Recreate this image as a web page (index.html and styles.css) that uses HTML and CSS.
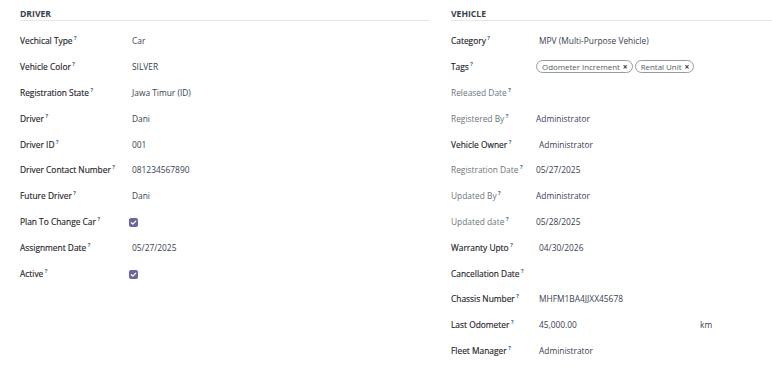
FILE: index.html
```html
<!DOCTYPE html>
<html>
<head>
<meta charset="utf-8">
<link rel="stylesheet" href="styles.css">
</head>
<body>
<div class="sheet">
  <section class="group group-left">
    <div class="group-title">Driver</div>
    <div class="fields">
      <div class="row"><div class="label">Vechical Type<sup>?</sup></div><div class="value edit">Car</div></div>
      <div class="row"><div class="label">Vehicle Color<sup>?</sup></div><div class="value edit">SILVER</div></div>
      <div class="row"><div class="label">Registration State<sup>?</sup></div><div class="value edit">Jawa Timur (ID)</div></div>
      <div class="row"><div class="label">Driver<sup>?</sup></div><div class="value edit">Dani</div></div>
      <div class="row"><div class="label">Driver ID<sup>?</sup></div><div class="value edit">001</div></div>
      <div class="row"><div class="label">Driver Contact Number<sup>?</sup></div><div class="value edit">081234567890</div></div>
      <div class="row"><div class="label">Future Driver<sup>?</sup></div><div class="value edit">Dani</div></div>
      <div class="row"><div class="label">Plan To Change Car<sup>?</sup></div><div class="value"><span class="check"><svg viewBox="0 0 10 10" width="9" height="9"><path d="M2.6 5.2 L4.3 6.8 L7.5 3.4" fill="none" stroke="#fff" stroke-width="1.4" stroke-linecap="round" stroke-linejoin="round"/></svg></span></div></div>
      <div class="row"><div class="label">Assignment Date<sup>?</sup></div><div class="value edit">05/27/2025</div></div>
      <div class="row"><div class="label">Active<sup>?</sup></div><div class="value"><span class="check"><svg viewBox="0 0 10 10" width="9" height="9"><path d="M2.6 5.2 L4.3 6.8 L7.5 3.4" fill="none" stroke="#fff" stroke-width="1.4" stroke-linecap="round" stroke-linejoin="round"/></svg></span></div></div>
    </div>
  </section>
  <section class="group group-right">
    <div class="group-title">Vehicle</div>
    <div class="fields">
      <div class="row"><div class="label">Category<sup>?</sup></div><div class="value edit">MPV (Multi-Purpose Vehicle)</div></div>
      <div class="row"><div class="label">Tags<sup>?</sup></div><div class="value tags"><span class="tag">Odometer Increment <b>×</b></span><span class="tag">Rental Unit <b>×</b></span></div></div>
      <div class="row"><div class="label muted">Released Date<sup>?</sup></div><div class="value"></div></div>
      <div class="row"><div class="label muted">Registered By<sup>?</sup></div><div class="value link">Administrator</div></div>
      <div class="row"><div class="label">Vehicle Owner<sup>?</sup></div><div class="value edit">Administrator</div></div>
      <div class="row"><div class="label muted">Registration Date<sup>?</sup></div><div class="value">05/27/2025</div></div>
      <div class="row"><div class="label muted">Updated By<sup>?</sup></div><div class="value link">Administrator</div></div>
      <div class="row"><div class="label muted">Updated date<sup>?</sup></div><div class="value">05/28/2025</div></div>
      <div class="row"><div class="label">Warranty Upto<sup>?</sup></div><div class="value edit">04/30/2026</div></div>
      <div class="row"><div class="label">Cancellation Date<sup>?</sup></div><div class="value edit"></div></div>
      <div class="row"><div class="label">Chassis Number<sup>?</sup></div><div class="value edit">MHFM1BA4JJXX45678</div></div>
      <div class="row"><div class="label">Last Odometer<sup>?</sup></div><div class="value edit odo"><span class="odo-num">45,000.00</span><span>km</span></div></div>
      <div class="row"><div class="label">Fleet Manager<sup>?</sup></div><div class="value edit">Administrator</div></div>
    </div>
  </section>
</div>
</body>
</html>
```
FILE: styles.css
```css
html, body {
  margin: 0;
  padding: 0;
  background: #ffffff;
}
body {
  width: 772px;
  height: 370px;
  overflow: hidden;
  font-family: "Open Sans", "Noto Sans", sans-serif;
  font-size: 8.4px;
  color: #212529;
}
.sheet {
  display: flex;
  gap: 22px;
  padding-left: 20px;
}
.group-left {
  width: 409px;
  flex: none;
}
.group-right {
  flex: 1;
  min-width: 0;
}
.group-title {
  height: 21px;
  box-sizing: border-box;
  padding-top: 7.5px;
  line-height: 12px;
  font-weight: 700;
  text-transform: uppercase;
  color: #374151;
  font-size: 8.6px;
  border-bottom: 1px solid #e6e6e6;
}
.fields {
  padding-top: 7px;
}
.row {
  display: flex;
  align-items: center;
  height: 25.8px;
}
.label {
  flex: none;
  color: #1f2328;
  white-space: nowrap;
  -webkit-text-stroke: 0.15px #1f2328;
}
.group-left .label { width: 109px; }
.group-right .label { width: 85px; }
.label.muted {
  color: #6c757d;
  -webkit-text-stroke: 0;
}
sup {
  font-size: 5.5px;
  color: #3a6a8c;
  font-weight: 700;
  margin-left: 1.5px;
  vertical-align: 4px;
  line-height: 0;
  -webkit-text-stroke: 0;
}
.value {
  color: #374151;
  white-space: nowrap;
}
.value.edit {
  padding-left: 3px;
}
.value.link {
  color: #3f3a63;
}
.check {
  display: inline-flex;
  width: 9px;
  height: 9px;
  border-radius: 2px;
  background: #71639e;
  align-items: center;
  justify-content: center;
  vertical-align: middle;
}
.tags {
  display: flex;
  gap: 2px;
}
.tag {
  display: inline-flex;
  align-items: center;
  height: 13px;
  box-sizing: border-box;
  padding: 0 4px 0 5px;
  border: 1px solid #9a9a9a;
  border-radius: 7px;
  font-size: 7.9px;
  color: #555b63;
}
.tag b {
  margin-left: 3px;
  font-size: 8.5px;
  color: #333;
}
.odo {
  display: flex;
}
.odo-num {
  width: 161px;
}
```
